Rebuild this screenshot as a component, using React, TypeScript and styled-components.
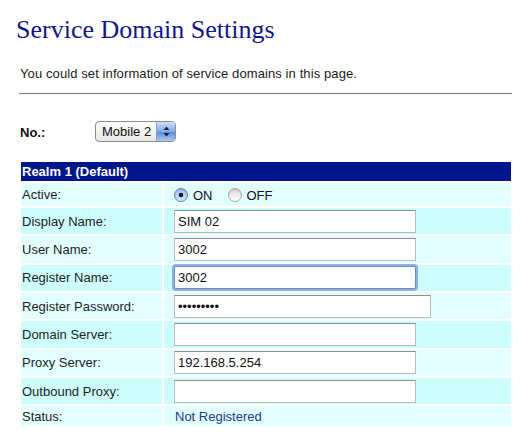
import styled, { createGlobalStyle } from "styled-components";

const GlobalStyle = createGlobalStyle`
  body {
    margin: 0;
    background: #fff;
    font-family: "Liberation Sans", Arial, sans-serif;
  }
`;

const Page = styled.div`
  width: 531px;
  padding-top: 15px;
`;

const Title = styled.h1`
  margin: 0 0 0 16px;
  font-family: "Liberation Serif", "Times New Roman", serif;
  font-weight: normal;
  font-size: 26px;
  line-height: 30px;
  color: #14148a;
`;

const Intro = styled.p`
  margin: 21px 0 0 20px;
  font-size: 13px;
  line-height: 15px;
  letter-spacing: 0.1px;
  color: #1c1c1c;
`;

const Divider = styled.div`
  margin: 12px 0 0 19px;
  width: 493px;
  border-top: 1px solid #777;
`;

const NoRow = styled.div`
  display: flex;
  align-items: center;
  margin: 27px 0 0 20px;
  height: 21px;
`;

const NoLabel = styled.span`
  width: 75px;
  font-size: 13px;
  font-weight: bold;
  color: #111;
  padding-top: 2px;
`;

const Select = styled.div`
  width: 81px;
  height: 21px;
  box-sizing: border-box;
  display: flex;
  align-items: center;
  border: 1px solid #8d8d8d;
  border-radius: 4px;
  background: linear-gradient(#ffffff, #e6e6e6);
  overflow: hidden;
  font-size: 13px;
  color: #111;
`;

const SelectText = styled.span`
  flex: 1;
  padding-left: 6px;
`;

const Stepper = styled.span`
  width: 18px;
  align-self: stretch;
  display: flex;
  align-items: center;
  justify-content: center;
  border-left: 1px solid #8a9cc0;
  background: linear-gradient(#cfe2fa, #7eaae6 50%, #5b8fd9 55%, #a9cbf3);
`;

const Table = styled.div`
  margin: 20px 0 0 21px;
  width: 490px;
  display: flex;
  flex-direction: column;
  gap: 2px;
`;

const Header = styled.div`
  height: 19px;
  display: flex;
  align-items: center;
  padding-left: 1px;
  background: #00178c;
  color: #fff;
  font-size: 13px;
  font-weight: bold;
`;

const Row = styled.div<{ $h: number; $alt?: boolean }>`
  display: grid;
  grid-template-columns: 141px 1fr;
  gap: 2px;
  height: ${(p) => p.$h}px;
  & > * {
    background: ${(p) => (p.$alt ? "#cdfdfd" : "#e2fefe")};
  }
`;

const Label = styled.div`
  display: flex;
  align-items: center;
  padding-left: 1px;
  font-size: 13px;
  color: #1e1e1e;
`;

const Value = styled.div`
  display: flex;
  align-items: center;
  padding-left: 10px;
  font-size: 13px;
  color: #111;
`;

const Field = styled.input<{ $w?: number; $focus?: boolean }>`
  width: ${(p) => p.$w ?? 242}px;
  height: 23px;
  box-sizing: border-box;
  margin: 0;
  padding: 0 3px;
  border: 1px solid ${(p) => (p.$focus ? "#6790c8" : "#b9b9b9")};
  border-top-color: ${(p) => (p.$focus ? "#6790c8" : "#8e8e8e")};
  border-radius: ${(p) => (p.$focus ? "2px" : "0")};
  box-shadow: ${(p) => (p.$focus ? "0 0 0 2px #8fb2e0" : "none")};
  outline: none;
  background: #fff;
  font-family: "Liberation Sans", Arial, sans-serif;
  font-size: 13px;
  color: #111;
`;

const RadioGroup = styled.div`
  display: flex;
  align-items: center;
`;

const Radio = styled.span<{ $on?: boolean }>`
  width: 14px;
  height: 14px;
  box-sizing: border-box;
  border-radius: 50%;
  border: 1px solid ${(p) => (p.$on ? "#5f83b9" : "#a3a3a3")};
  background: ${(p) =>
    p.$on
      ? "radial-gradient(circle, #1b1b2a 0 2px, transparent 2.6px), linear-gradient(#9fc0ec, #d4e6fb)"
      : "linear-gradient(#dcdcdc, #ffffff)"};
  box-shadow: inset 0 1px 1px rgba(0, 0, 0, 0.15);
`;

const RadioText = styled.span<{ $gap: number }>`
  margin: 1px ${(p) => p.$gap}px 0 5px;
`;

const Status = styled.span`
  padding-left: 1px;
  color: #1b3b8c;
`;

export default function App() {
  return (
    <Page>
      <GlobalStyle />
      <Title>Service Domain Settings</Title>
      <Intro>You could set information of service domains in this page.</Intro>
      <Divider />
      <NoRow>
        <NoLabel>No.:</NoLabel>
        <Select>
          <SelectText>Mobile 2</SelectText>
          <Stepper>
            <svg width="7" height="11" viewBox="0 0 7 11">
              <path d="M3.5 0.5 L6.5 4 L0.5 4 Z" fill="#1a2540" />
              <path d="M3.5 10.5 L6.5 7 L0.5 7 Z" fill="#1a2540" />
            </svg>
          </Stepper>
        </Select>
      </NoRow>
      <Table>
        <Header>Realm 1 (Default)</Header>
        <Row $h={23}>
          <Label>Active:</Label>
          <Value>
            <RadioGroup>
              <Radio $on />
              <RadioText $gap={15}>ON</RadioText>
              <Radio />
              <RadioText $gap={0}>OFF</RadioText>
            </RadioGroup>
          </Value>
        </Row>
        <Row $h={26.33} $alt>
          <Label>Display Name:</Label>
          <Value>
            <Field defaultValue="SIM 02" />
          </Value>
        </Row>
        <Row $h={26.33}>
          <Label>User Name:</Label>
          <Value>
            <Field defaultValue="3002" />
          </Value>
        </Row>
        <Row $h={26.33} $alt>
          <Label>Register Name:</Label>
          <Value>
            <Field defaultValue="3002" $focus />
          </Value>
        </Row>
        <Row $h={26.33}>
          <Label>Register Password:</Label>
          <Value>
            <Field type="password" defaultValue="123456789" $w={257} />
          </Value>
        </Row>
        <Row $h={26.33} $alt>
          <Label>Domain Server:</Label>
          <Value>
            <Field defaultValue="" />
          </Value>
        </Row>
        <Row $h={26.33}>
          <Label>Proxy Server:</Label>
          <Value>
            <Field defaultValue="192.168.5.254" />
          </Value>
        </Row>
        <Row $h={26.33} $alt>
          <Label>Outbound Proxy:</Label>
          <Value>
            <Field defaultValue="" />
          </Value>
        </Row>
        <Row $h={20}>
          <Label>Status:</Label>
          <Value>
            <Status>Not Registered</Status>
          </Value>
        </Row>
      </Table>
    </Page>
  );
}
